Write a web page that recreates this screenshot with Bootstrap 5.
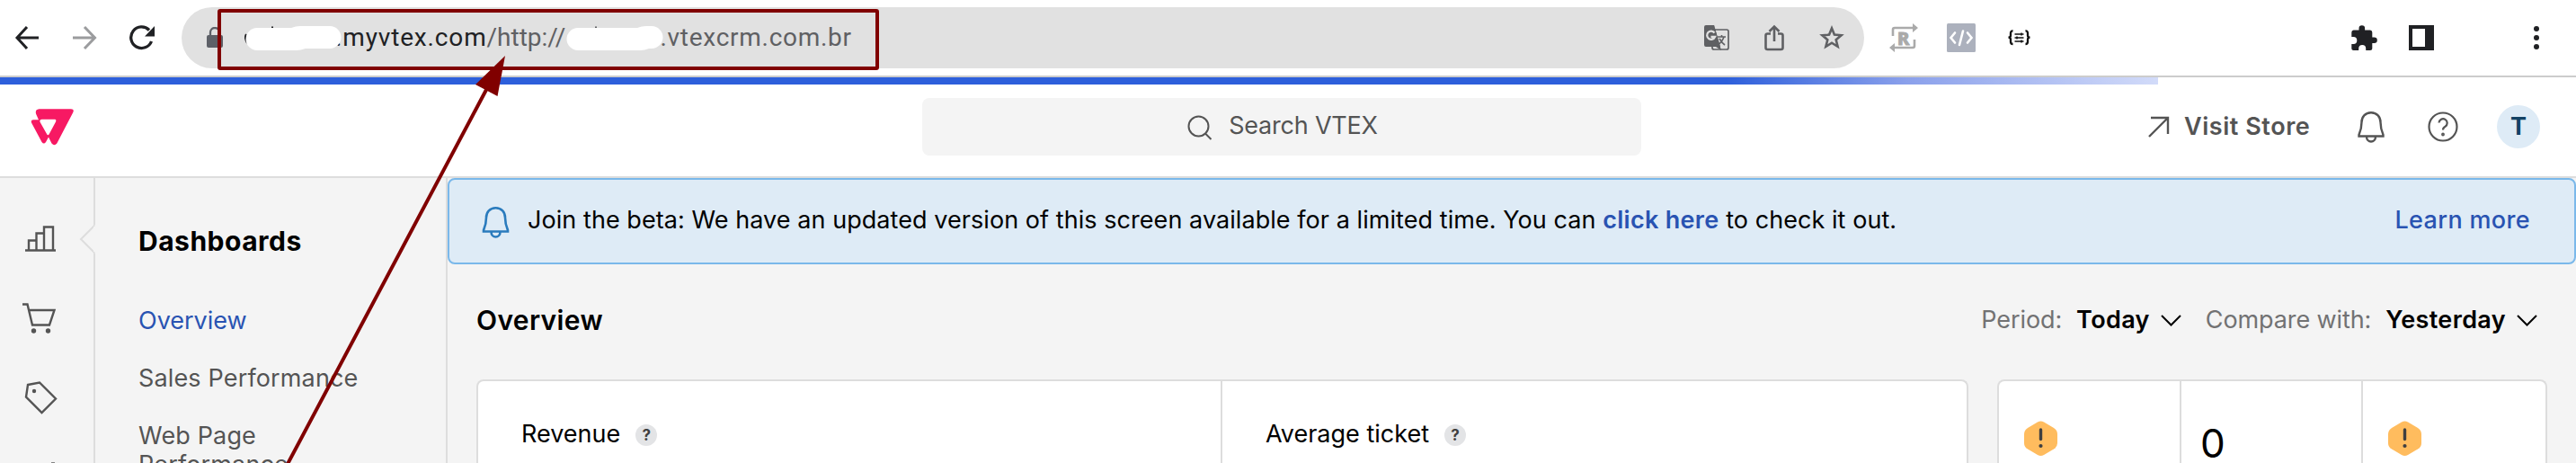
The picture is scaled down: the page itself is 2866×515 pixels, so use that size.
<!DOCTYPE html>
<html lang="en">
<head>
<meta charset="utf-8">
<title>VTEX Admin - Overview</title>
<link href="https://cdn.jsdelivr.net/npm/bootstrap@5.3.0/dist/css/bootstrap.min.css" rel="stylesheet">
<style>
body{font-family:Inter,"Liberation Sans",sans-serif;font-size:27px;line-height:32px;color:#000;background:#fff;width:2866px;height:515px;overflow:hidden;position:relative}
a{text-decoration:none;color:#2953b2}
svg{display:block;flex:none}
.browser-bar{height:86px;border-bottom:2px solid #ccc;padding-left:16px}
.browser-bar .fwd{margin-left:37px}
.browser-bar .reload{margin-left:35px}
.url-pill{width:1872px;height:68px;background:#e1e1e1;border-radius:34px;margin-left:30px;padding:0 22px 0 28px}
.url-text{font-family:Roboto,sans-serif;font-size:28px;color:#5f6063}
.url-host{color:#202124;letter-spacing:.85px;margin-left:-7px}
.url-rest{letter-spacing:.73px;margin-left:-4px}
.url-blob{position:relative;z-index:1}
.pill-icons{gap:39px}
.ext-icons{margin-left:28px;gap:32px}
.bar-end{margin-left:357px;gap:35px}
.bar-dots{margin-left:111px}
.topbar{height:112px;border-bottom:2px solid #ddd;color:#545454;padding:0 40px 0 34px}
.load-bar{top:0;left:0;width:2401px;height:8px;background:linear-gradient(90deg,#2d5fdb 0,#2d5fdb 1920px,#8aa0eb 2120px,#d2dbf9 2401px)}
.search-box{width:800px;height:64px;background:#f4f4f4;border-radius:8px;margin-left:944px;padding-bottom:3px;letter-spacing:-.2px}
.search-box svg{margin:4px 18px 0 2px}
.store-link{margin-left:564px;gap:16px;color:#545454;font-weight:600;letter-spacing:.55px}
.avatar-dot{width:48px;height:48px;background:#deebf6;color:#134264;font-weight:700;margin-left:43px}
.app-body{height:317px;background:#f4f4f4}
.icon-rail{width:106px;border-right:2px solid #ddd}
.rail-notch{left:88px;top:51px}
.side-menu{width:392px;border-right:2px solid #ddd;padding:54px 0 0 48px}
.side-menu h2{font-size:30px;line-height:32px;font-weight:700;color:#000;margin:0 0 57px;letter-spacing:.5px}
.side-menu a{color:#545454;margin-bottom:32px;width:260px;letter-spacing:.15px}
.side-menu a.current{color:#2953b2;letter-spacing:0}
.beta-alert{height:96px;background:#deebf6;border:2px solid #7ab8ea;border-radius:8px;padding:0 49px 2px 36px;letter-spacing:.06px}
.beta-alert svg{margin:4px 20px 0 0}
.link-strong{font-weight:600;letter-spacing:.3px}
.link-medium{font-weight:500;letter-spacing:.35px}
.page-head{height:128px;padding:0 42px 4px 32px}
.page-head h1{font-size:30px;line-height:32px;font-weight:600;margin:0;letter-spacing:.35px}
.page-head .soft{color:#727273;letter-spacing:-.1px}
.page-head .pick{font-weight:600;letter-spacing:.35px}
.panel{background:#fff;border:2px solid #ddd;border-bottom:0;border-radius:8px 8px 0 0;height:93px}
.panel>div+div{border-left:2px solid #ddd}
.panel-wide{width:1660px;margin-left:32px}
.panel-slim{width:612px;margin-left:32px}
.metric{padding:43px 0 0 48px;gap:17px;flex:1 0 0}
.metric:first-child{flex:0 0 826px}
.help-dot{width:24px;height:24px;background:#e3e4e6;color:#3f3f40;font-size:17px;line-height:24px;font-weight:700;margin-top:5px}
.panel-slim>div{width:202px;flex:none}
.panel-slim>div:first-child{width:201px}
.zero{font-size:44px;line-height:45px;padding:47px 0 0 21px}
.hexcell{padding:44px 0 0 28px}
.callout{left:0;top:0;z-index:5}
</style>
</head>
<body>
<header class="browser-bar d-flex align-items-center">
 <svg width="28" height="28" fill="none" stroke="#202124" stroke-width="3"><path d="M27 14H3M14 2 3 14 14 26"/></svg>
 <svg class="fwd" width="28" height="28" fill="none" stroke="#9b9c9e" stroke-width="3"><path d="M0 14H25M13 2 24.500 14 13 26"/></svg>
 <svg class="reload" width="28" height="28" fill="none"><path d="M24.500 18A11.800 11.800 0 1 1 22 5.500" stroke="#202124" stroke-width="3.300"/><path d="M28 1V12.500H17Z" fill="#202124"/></svg>
 <div class="url-pill d-flex align-items-center">
  <svg width="18" height="24"><path d="M4 10V6a5 5 0 0 1 10 0V10" fill="none" stroke="#5d6067" stroke-width="2.300"/><rect y="9" width="18" height="14" rx="2" fill="#5d6067"/></svg>
  <svg class="url-blob ms-4" width="108" height="32"><path d="M2 12Q-.5 16 3 22M31 3.500v4" stroke="#202124" stroke-width="2" fill="none"/><path d="M14 5H52Q57 3 62 3H95a12.500 12.500 0 0 1 0 25H68Q62 30 58 30H14A12.500 12.500 0 0 1 14 5" fill="#fff"/></svg>
  <span class="url-text url-host">.myvtex.com</span><span class="url-text">/http://</span>
  <svg class="url-blob" width="109" height="32"><path d="M34 3.500v4" stroke="#5f6063" stroke-width="2" fill="none"/><path d="M14 5H80Q85 3 90 3H96a12.500 12.500 0 0 1 0 25H93Q88 30 84 30H14A12.500 12.500 0 0 1 14 5" fill="#fff"/></svg>
  <span class="url-text url-rest">.vtexcrm.com.br</span>
  <div class="pill-icons d-flex align-items-center ms-auto">
   <svg width="28" height="28"><rect x="9" y="5" width="18" height="22" rx="2" fill="none" stroke="#5f6063" stroke-width="1.700"/><path d="M2 0H11L19 28 13 24H2Q0 24 0 22V2Q0 0 2 0Z" fill="#5f6063"/><path d="M11 0 18 24H13Z" fill="#5f6063"/><path d="M11.500 8.500A4.600 4.600 0 1 0 12 13H7.500" fill="none" stroke="#e1e1e1" stroke-width="2.300"/><path d="M15 13H24M19.500 11v2M22 13q-2 6-7 9M17 15q3 5 6 7" fill="none" stroke="#5f6063" stroke-width="1.600"/></svg>
   <svg width="22" height="30" fill="none" stroke="#5f6063" stroke-width="2.600"><path d="M7 10.500H3.500a2 2 0 0 0-2 2V26a2 2 0 0 0 2 2h15a2 2 0 0 0 2-2V12.500a2 2 0 0 0-2-2H15M11 19V3M5.500 8 11 2.500 16.500 8"/></svg>
   <svg width="28" height="28" fill="none" stroke="#5f6063" stroke-width="2.600"><path d="m14 3.500 2.900 7.100 7.700.6-5.900 5 1.900 7.600L14 19.700l-6.600 4.100 1.900-7.600-5.900-5 7.700-.6Z"/></svg>
  </div>
 </div>
 <div class="ext-icons d-flex align-items-center">
  <svg width="32" height="32"><path d="M4 14V7q0-2 2-2H26M28 18v7q0 2-2 2H6" fill="none" stroke="#aaa" stroke-width="2.600"/><path d="M26 0l6 5-6 5zM6 22l-6 5 6 5z" fill="#aaa"/><text x="9" y="23.500" font-family="Noto Sans" font-weight="800" font-size="20" fill="#aaa" stroke="#aaa">R</text></svg>
  <svg width="32" height="32"><rect width="32" height="32" rx="1.500" fill="#acb1bd"/><path d="M9 10.500 4.500 16 9 21.500M23 10.500 27.500 16 23 21.500M18 8.500 14 24" fill="none" stroke="#fff" stroke-width="2.600" stroke-linecap="round"/></svg>
  <svg class="ms-1" width="25" height="18" fill="none" stroke="#111" stroke-width="2.300"><path d="M5.500 1.500Q3 1.200 3 4V6.500Q3 8.700.5 8.700 3 8.700 3 11v2.500Q3 16 5.500 16M19.500 1.500Q22 1.200 22 4V6.500Q22 8.700 24.500 8.700 22 8.700 22 11v2.500Q22 16 19.500 16"/><path stroke-width="1.500" d="M7.500 5H17.500M7.500 9H17.500M7.500 13H17.500M15 3.500V6.500M10 7.500V10.500M15 11.500V14.500"/></svg>
 </div>
 <div class="bar-end d-flex align-items-center">
  <svg width="29" height="30"><path d="M2.500 6.500H8.500V4.500a3.300 3.300 0 0 1 6.600 0V6.500H21Q23.300 6.500 23.300 9V14.500H25.500a3.300 3.300 0 0 1 0 6.600H23.300V27Q23.300 29 21 29H16.200V27a4 4 0 0 0-8 0V29H2.500Q.3 29 .3 27V22H2.300a4 4 0 0 0 0-8H.3V9Q.3 6.500 2.500 6.500Z" fill="#202124"/></svg>
  <svg width="28" height="28"><path d="M0 0H28V28H0ZM4 4V24H18V4Z" fill="#202124" fill-rule="evenodd"/></svg>
 </div>
 <svg class="bar-dots" width="6" height="28" fill="#202124"><circle cx="3" cy="4" r="3"/><circle cx="3" cy="14" r="3"/><circle cx="3" cy="24" r="3"/></svg>
</header>

<div class="topbar d-flex align-items-center position-relative">
 <div class="load-bar position-absolute"></div>
 <svg width="48" height="42"><path fill="#f71963" fill-rule="evenodd" d="M9.500 1.300H45Q49 1.300 47.300 5L29.300 39.500Q26.500 43 23.500 39.500L20 32.500 17 38Q14.800 41 12.500 38L1 16.500Q0 13.300 3 13.300H9L6.200 7Q4.500 2 9.500 1.300ZM12.500 12.800Q9.500 13 10.700 16L18.300 29.500Q19.300 31 20.500 29.500L28 15.500Q29 12.800 27 12.800Z"/></svg>
 <div class="search-box d-flex align-items-center justify-content-center">
  <svg width="28" height="28" fill="none" stroke="#545454" stroke-width="2"><circle cx="12.500" cy="12.500" r="11"/><path d="m20 20.500 6.500 6.500"/></svg>
  <span>Search VTEX</span>
 </div>
 <a class="store-link d-flex align-items-center" href="#"><svg width="24" height="24" fill="none" stroke="#545454" stroke-width="2.400"><path d="M1 23 22 2M3 2H22V20"/></svg><span>Visit Store</span></a>
 <div class="d-flex align-items-center ms-auto">
  <svg width="30" height="36" fill="none" stroke="#545454" stroke-width="2.400"><path d="M15 2.200C8.500 2.200 4.500 7 4.500 13Q4.500 20 1.500 27V28.500H28.500V27Q25.500 20 25.500 13C25.500 7 21.500 2.200 15 2.200ZM10 29a5 5.500 0 0 0 10 0"/></svg>
  <svg class="ms-5" width="34" height="34" fill="none" stroke="#545454" stroke-width="2.200"><circle cx="17" cy="17" r="15.500"/><path d="M12.500 12.500a4.600 4.600 0 1 1 7 4.200Q17 18 17 20.500"/><circle cx="17" cy="25.500" r=".8"/></svg>
  <div class="avatar-dot rounded-circle d-flex align-items-center justify-content-center">T</div>
 </div>
</div>

<div class="app-body d-flex">
 <nav class="icon-rail position-relative">
  <svg width="104" height="317" fill="none" stroke="#545454" stroke-width="2.400"><path d="M28 80.500H62M32 80V69.500H40.500M40.500 80V61.500H49M49 80V54.500H59V80"/><path d="M25 140.500H30.500L36 163.500H55L60.500 147H32.500"/><circle cx="37.500" cy="170" r="2.700" fill="#545454" stroke="none"/><circle cx="53.500" cy="170" r="2.700" fill="#545454" stroke="none"/><path d="M31 230 44 227.500 62 245.500 46.500 261 29 243.500Z"/><circle cx="38" cy="237" r="2.200" fill="#545454" stroke="none"/><path d="M57 317.500h4"/></svg>
  <svg class="rail-notch position-absolute" width="20" height="34"><path d="M18 1 2 17 18 33z" fill="#f4f4f4"/><path d="M17 2 2 17 17 32" fill="none" stroke="#ddd" stroke-width="2"/><path d="M17.500 3V31" stroke="#f4f4f4" stroke-width="3"/></svg>
 </nav>
 <nav class="side-menu d-flex flex-column">
  <h2>Dashboards</h2>
  <a class="current" href="#">Overview</a>
  <a href="#">Sales Performance</a>
  <a href="#">Web Page<br>Performance</a>
 </nav>
 <main class="flex-grow-1">
  <div class="beta-alert d-flex align-items-center">
   <svg width="31" height="36" fill="none" stroke="#2a7bbd" stroke-width="2.600"><path d="M15.500 2.200C9 2.200 5 7 5 13Q5 20 2 27V28.500H29V27Q26 20 26 13C26 7 22 2.200 15.500 2.200ZM10.500 29a5 5.500 0 0 0 10 0"/></svg>
   <span>Join the beta: We have an updated version of this screen available for a limited time. You can <a class="link-strong" href="#">click here</a> to check it out.</span>
   <a class="link-medium ms-auto" href="#">Learn more</a>
  </div>
  <div class="page-head d-flex align-items-center">
   <h1>Overview</h1>
   <span class="soft ms-auto">Period:</span><span class="pick ms-3">Today</span>
   <svg width="62" height="14" fill="none" stroke="#000" stroke-width="2"><path d="M13 2 23.500 12.500 34 2"/></svg>
   <span class="soft">Compare with:</span><span class="pick ms-3">Yesterday</span>
   <svg width="36" height="14" fill="none" stroke="#000" stroke-width="2"><path d="M13 2 23.500 12.500 34 2"/></svg>
  </div>
  <div class="d-flex">
   <section class="panel panel-wide d-flex">
    <div class="metric d-flex align-items-start"><span>Revenue</span><span class="help-dot rounded-circle text-center">?</span></div>
    <div class="metric d-flex align-items-start"><span>Average ticket</span><span class="help-dot rounded-circle text-center">?</span></div>
   </section>
   <section class="panel panel-slim d-flex">
    <div class="hexcell"><svg width="37" height="40"><path fill="#ffbc5e" d="M15 1.500Q18.500-.5 22 1.500L33 8Q37 10.500 37 15V25Q37 29 33 31.500L22 38Q18.500 40 15 38L4 31.500Q0 29 0 25V15Q0 10.500 4 8Z"/><path d="M18.500 10V20.500" stroke="#3f3f40" stroke-width="3.400" stroke-linecap="round"/><circle cx="18.500" cy="28" r="2.100" fill="#3f3f40"/></svg></div>
    <div class="zero">0</div>
    <div class="hexcell"><svg width="37" height="40"><path fill="#ffbc5e" d="M15 1.500Q18.500-.5 22 1.500L33 8Q37 10.500 37 15V25Q37 29 33 31.500L22 38Q18.500 40 15 38L4 31.500Q0 29 0 25V15Q0 10.500 4 8Z"/><path d="M18.500 10V20.500" stroke="#3f3f40" stroke-width="3.400" stroke-linecap="round"/><circle cx="18.500" cy="28" r="2.100" fill="#3f3f40"/></svg></div>
   </section>
  </div>
 </main>
</div>

<svg class="callout position-absolute pe-none" width="2866" height="515"><rect x="244" y="12" width="732" height="64" rx="1" fill="none" stroke="#800000" stroke-width="4"/><path d="M542 98 320 516" stroke="#800000" stroke-width="4"/><path d="M562 62 553.500 107 529 94Z" fill="#800000"/></svg>
<script src="https://cdn.jsdelivr.net/npm/bootstrap@5.3.0/dist/js/bootstrap.bundle.min.js"></script>
</body>
</html>
